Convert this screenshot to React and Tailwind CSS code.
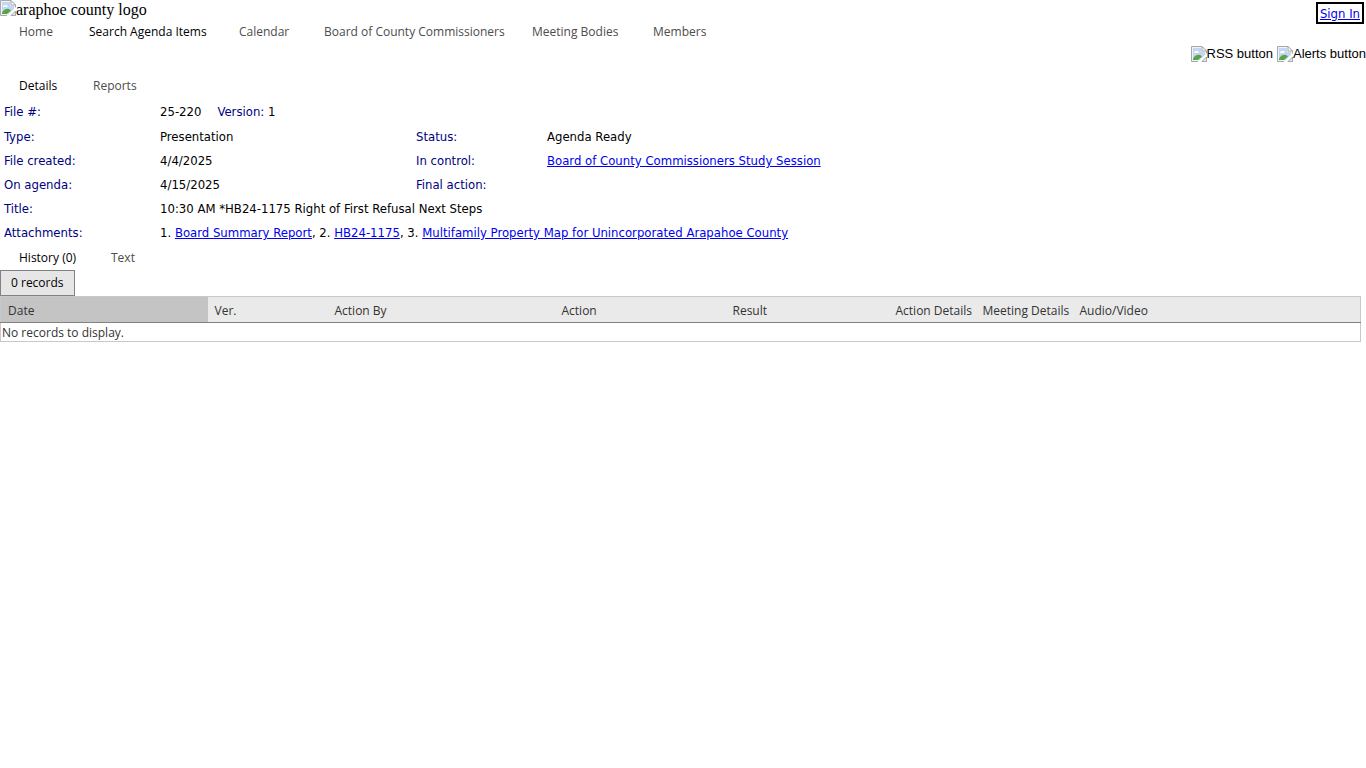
import { useState } from 'react'

const navItems = [
  { name: 'Home', width: 'w-[70px]' },
  { name: 'Search Agenda Items', width: 'w-[150px]' },
  { name: 'Calendar', width: 'w-[85px]' },
  { name: 'Board of County Commissioners', width: 'w-[208px]' },
  { name: 'Meeting Bodies', width: 'w-[121px]' },
  { name: 'Members', width: '' },
]

const detailTabs = [
  { name: 'Details', width: 'w-[74px]' },
  { name: 'Reports', width: '' },
]

const sectionTabs = [
  { name: 'History (0)', width: 'w-[92px]' },
  { name: 'Text', width: '' },
]

const columns = [
  { name: 'Date', width: 'w-[207px]' },
  { name: 'Ver.', width: 'w-[120px]' },
  { name: 'Action By', width: 'w-[227px]' },
  { name: 'Action', width: 'w-[171px]' },
  { name: 'Result', width: 'w-[163px]' },
  { name: 'Action Details', width: 'w-[87px]' },
  { name: 'Meeting Details', width: 'w-[97px]' },
  { name: 'Audio/Video', width: '' },
]

function MissingImage({ alt }) {
  return (
    <span className="inline-flex items-start">
      <svg width="16" height="16" viewBox="0 0 16 16" aria-hidden="true" className="shrink-0">
        <path d="M0.5 0.5H11L15.500 5V15.500H0.500Z" fill="#c3d6f6" stroke="#a8a8a8" />
        <path d="M1.500 1.500H10.500V5.500H14.500V14.500H1.500Z" fill="none" stroke="#eef3fc" />
        <path d="M11 0.500V5H15.500Z" fill="#fff" stroke="#a8a8a8" />
        <path d="M3 7C2.800 5.500 4 5 5 5.500C5.500 4 8 4.500 7.500 7Z" fill="#fff" />
        <path d="M2 14V12.500C4 9.500 7 7.500 10 9.500L11 10.500L7 14Z" fill="#57a544" />
        <path d="M6.500 16L16 7V10.500L10.500 16Z" fill="#fff" />
        <path d="M11 15.500L15.500 11V15.500Z" fill="#e3efdd" stroke="#a8a8a8" />
      </svg>
      <span>{alt}</span>
    </span>
  )
}

function Tabs({ items, active, onSelect, label }) {
  return (
    <nav aria-label={label} className="flex h-6 items-center px-[19px] font-['Open_Sans',sans-serif] text-[12px] whitespace-nowrap">
      {items.map(item => (
        <div key={item.name} className={item.width}>
          <a href="#" onClick={(e) => { e.preventDefault(); onSelect(item.name) }}
            className={item.name === active ? 'text-black' : 'text-[#4c4c4c]'}>
            {item.name}
          </a>
        </div>
      ))}
    </nav>
  )
}

function Link({ children }) {
  return <a href="#" className="text-[#0000ee] underline">{children}</a>
}

function Label({ children }) {
  return <dt className="text-[#000080]">{children}</dt>
}

function App() {
  const [page, setPage] = useState('Search Agenda Items')
  const [tab, setTab] = useState('Details')
  const [section, setSection] = useState('History (0)')

  return (
    <div className="bg-white text-black">
      <header>
        <div className="flex h-5 items-start justify-between">
          <div className="font-['Liberation_Serif',serif] text-[16px] leading-5">
            <MissingImage alt="araphoe county logo" />
          </div>
          <a href="#" className="mt-0.5 mr-0.5 border-2 border-black px-0.5 pt-px font-['DejaVu_Sans_Condensed','DejaVu_Sans',sans-serif] text-[13px] leading-[17px] text-[#0000ee] underline">Sign In</a>
        </div>
        <Tabs items={navItems} active={page} onSelect={setPage} label="Main" />
        <div className="flex h-[30px] items-start justify-end gap-1 pt-0.5 font-['Liberation_Sans',sans-serif] text-[13px] leading-4">
          <button type="button"><MissingImage alt="RSS button" /></button>
          <button type="button"><MissingImage alt="Alerts button" /></button>
        </div>
      </header>

      <main>
        <Tabs items={detailTabs} active={tab} onSelect={setTab} label="Agenda item" />
        <dl className="grid grid-cols-[156px_256px_131px_1fr] grid-rows-[25px] pt-0.5 pb-px pl-1 font-['DejaVu_Sans_Condensed','DejaVu_Sans',sans-serif] text-[13px] leading-6">
          <Label>File #:</Label>
          <dd className="col-span-3 flex gap-4">
            25-220
            <span><span className="text-[#000080]">Version:</span> 1</span>
          </dd>
          <Label>Type:</Label>
          <dd>Presentation</dd>
          <Label>Status:</Label>
          <dd>Agenda Ready</dd>
          <Label>File created:</Label>
          <dd>4/4/2025</dd>
          <Label>In control:</Label>
          <dd><Link>Board of County Commissioners Study Session</Link></dd>
          <Label>On agenda:</Label>
          <dd>4/15/2025</dd>
          <Label>Final action:</Label>
          <dd></dd>
          <Label>Title:</Label>
          <dd className="col-span-3">10:30 AM *HB24-1175 Right of First Refusal Next Steps</dd>
          <Label>Attachments:</Label>
          <dd className="col-span-3">
            1. <Link>Board Summary Report</Link>, 2. <Link>HB24-1175</Link>, 3. <Link>Multifamily Property Map for Unincorporated Arapahoe County</Link>
          </dd>
        </dl>

        <Tabs items={sectionTabs} active={section} onSelect={setSection} label="History" />
        <div className="pr-[5px] font-['Open_Sans',sans-serif] text-[12px]">
          <button type="button" className="block h-[26px] border border-[#828282] bg-[#e6e6e6] px-[10px] text-black">0 records</button>
          <table className="w-full table-fixed border-collapse border border-[#c9c9c9] text-left text-[#333333]">
            <thead>
              <tr className="h-[26px] border-b border-[#828282] bg-[#eaeaea]">
                {columns.map(column => (
                  <th key={column.name} scope="col"
                    className={`p-0 pl-[7px] pt-0.5 font-normal whitespace-nowrap first:bg-[#c4c4c4] ${column.width}`}>
                    {column.name}
                  </th>
                ))}
              </tr>
            </thead>
            <tbody>
              <tr className="h-[19px]">
                <td colSpan={8} className="p-0 pt-px pl-px leading-[17px]">No records to display.</td>
              </tr>
            </tbody>
          </table>
        </div>
      </main>
    </div>
  )
}

export default App
